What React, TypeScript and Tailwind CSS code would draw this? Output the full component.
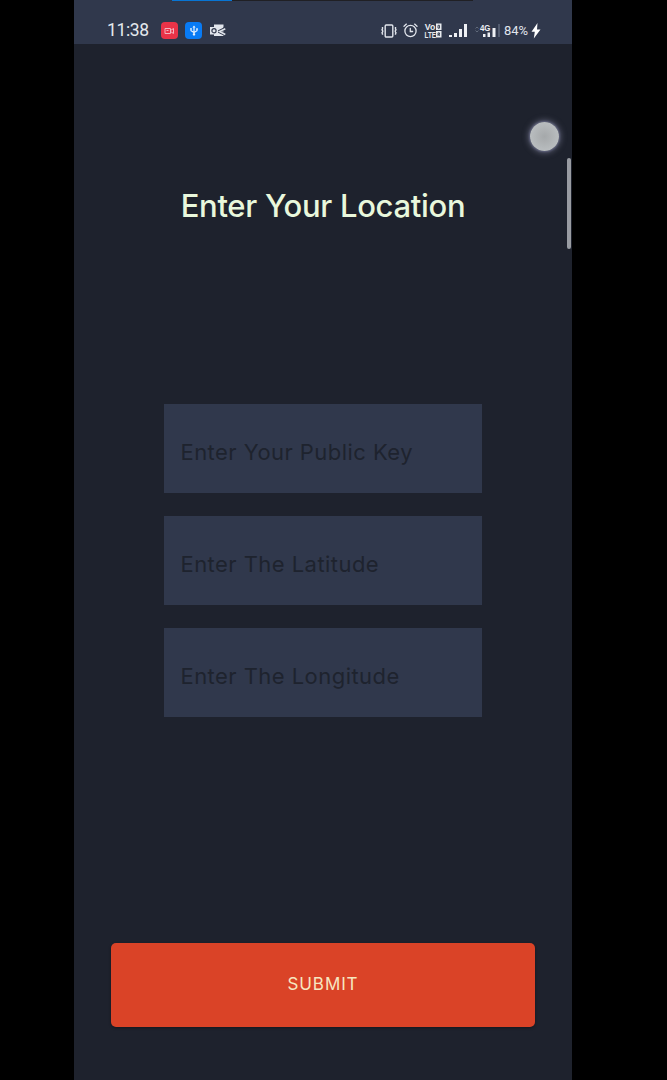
import React from "react";

function StatusLeft() {
  return (
    <div className="flex items-center">
      <span className="w-[54px] whitespace-nowrap pt-px text-[17.5px] leading-none tracking-[-0.35px] text-[#e4e8ee]">11:38</span>
      <div className="flex h-[17px] w-[17px] items-center justify-center rounded-[4px] bg-[#e93348]">
        <svg width="11" height="8" viewBox="0 0 11 8" fill="none" stroke="#f3b4bf" strokeWidth="1">
          <path d="M1 1.500h5.500v5H1zM6.500 3.500 9.500 1.500v5l-3-2M2.500 3.500h2" />
        </svg>
      </div>
      <div className="ml-[7px] flex h-[17px] w-[17px] items-center justify-center rounded-[4px] bg-[#087bf5]">
        <svg width="10" height="11" viewBox="0 0 11 12" fill="none" stroke="#e6f1ff" strokeWidth="1.3">
          <path d="M5.500 2v8M2.200 4.500v1.700L5.500 8.300 8.800 6.200V4.500" />
          <path d="M3.800 2.800 5.500.4l1.700 2.400z" fill="#e6f1ff" stroke="none" />
          <circle cx="5.500" cy="10.300" r="1.300" fill="#e6f1ff" stroke="none" />
          <circle cx="2.200" cy="4.200" r="1" fill="#e6f1ff" stroke="none" />
          <path d="M7.900 3.400h1.800v1.800H7.900z" fill="#e6f1ff" stroke="none" />
        </svg>
      </div>
      <svg className="ml-2" width="16" height="13" viewBox="0 0 16 13">
        <path d="M4 .5h9.500v11.500H4z" fill="#e1e5ec" />
        <path d="M14 3v7" stroke="#30384c" strokeWidth="1" />
        <path d="m15 4.500-6 3 6 3" fill="none" stroke="#30384c" strokeWidth="3" />
        <path d="m15.300 4.800-5.800 2.700 5.800 3" fill="none" stroke="#e1e5ec" strokeWidth="1.500" />
        <path d="M0 3h8v7.500H0z" fill="#e1e5ec" />
        <circle cx="4" cy="6.700" r="2.100" fill="none" stroke="#30384c" strokeWidth="1.200" />
      </svg>
    </div>
  );
}

function StatusRight() {
  return (
    <div className="flex items-center">
      <svg width="16" height="14" viewBox="0 0 16 14" fill="none" stroke="#e1e5ec" strokeWidth="1.4">
        <rect x="4.200" y="1" width="7.600" height="12" rx="1" />
        <path d="M1.500 3v2l-.5.8.7 1v1l-.7 1 .5 1v1M14.500 3v2l.5.8-.7 1v1l.7 1-.5 1v1" />
      </svg>
      <svg className="ml-[6px]" width="15" height="15" viewBox="0 0 15 15" fill="none" stroke="#e1e5ec" strokeWidth="1.300" strokeLinecap="round">
        <circle cx="7.500" cy="8" r="5.600" />
        <path d="M7.300 5.300v3.200h2.300M1 3.200 3.400 1.100M14 3.200l-2.400-2.100" />
      </svg>
      <svg className="ml-[6px]" width="18" height="15" viewBox="0 0 18 15" fill="#e8ebef" fontFamily="Liberation Sans, sans-serif" fontWeight="700">
        <text fontSize="8.800">
          <tspan x="0.800" y="6.900" textLength="10.500" lengthAdjust="spacingAndGlyphs">Vo</tspan>
          <tspan x="0.500" y="14.500" textLength="11.500" lengthAdjust="spacingAndGlyphs">LTE</tspan>
        </text>
        <path d="M12 .5h5.500v6.500H12zM12 8h5.500v6.500H12z" />
        <path d="M14 2.300h1.500v2.900H14zM14 12.900v-3h1.500v1.500H14M15.300 11.500v1.500" fill="none" stroke="#30384c" strokeWidth=".9" />
      </svg>
      <svg className="ml-[7px]" width="19" height="15" viewBox="0 0 19 15" fill="#eef0f4">
        <path d="M0 12h3v2H0zM5 10h3v4H5zM10 6h3v8h-3zM15 1h3v13h-3z" />
      </svg>
      <svg className="ml-[6px]" width="27" height="17" viewBox="0 0 27 17">
        <path d="m1.500 6.500 1.500-1.500 1.500 1.500M1.500 8.500l1.500 1.500 1.500-1.500" fill="none" stroke="#606a7b" />
        <text x="6" y="8.500" fontFamily="Liberation Sans, sans-serif" fontSize="9.500" fontWeight="700" fill="#eef0f4" textLength="10.500" lengthAdjust="spacingAndGlyphs">4G</text>
        <path d="M9 12h2.500v3H9zM13.500 10.500h2.500V15h-2.500zM18.500 6h3v9h-3z" fill="#eef0f4" />
        <path d="M24 2h2v13h-2z" fill="#535c70" />
      </svg>
      <span className="ml-[3px] w-[27px] whitespace-nowrap text-[13px] leading-none text-[#e1e5ec]">84%</span>
      <svg width="10" height="16" viewBox="0 0 10 16">
        <path d="M6.500 0 .5 8.800h3.300L2.800 15.500 9.500 6.500H6z" fill="#fff" />
      </svg>
    </div>
  );
}

const fields = ["Enter Your Public Key", "Enter The Latitude", "Enter The Longitude"];

export default function App() {
  return (
    <div className="flex h-[1080px] w-[667px] justify-center overflow-hidden bg-black pl-[74px] pr-[95px] font-['Inter','Noto_Sans',sans-serif]">
      <main className="relative flex w-[498px] shrink-0 flex-col items-center bg-[#1e222d]">
        <header className="flex h-11 w-full flex-col bg-[#30384c]">
          <div className="ml-[98px] flex h-px w-[301px] bg-[#202024]">
            <div className="w-[60px] bg-[#0875d4]" />
          </div>
          <div className="flex h-[43px] items-center justify-between pl-[33px] pr-[31px] pt-[16px] font-['Roboto',sans-serif]">
            <StatusLeft />
            <StatusRight />
          </div>
        </header>

        <h1 className="mt-[142px] h-10 whitespace-nowrap text-[31px] font-medium leading-10 tracking-[-0.3px] text-[#e9f8dc]">
          Enter Your Location
        </h1>

        <form className="mt-[178px] flex w-[318px] flex-col gap-[23.5px]">
          {fields.map((field) => (
            <label key={field} className="flex h-[88.5px] items-center bg-[#30384c] pl-[16.500px] pt-[8px] text-[22px] tracking-[0.45px] text-[#1e232e]">
              <span className="whitespace-nowrap">{field}</span>
            </label>
          ))}
        </form>

        <button className="mt-[226px] flex h-[84px] w-[424px] items-center justify-center rounded-[5px] bg-[#da4327] text-[17px] tracking-[0.9px] text-[#f6e7c0] shadow-[0_1px_3px_rgba(0,0,0,0.35)]">
          SUBMIT
        </button>

        <div className="absolute left-[456px] top-[122px] h-[29px] w-[29px] rounded-full bg-[radial-gradient(circle,#a5a8aa_0%,#b3b7b9_50%,#c2c6c9_100%)] shadow-[0_0_2px_1px_#626580,0_0_5px_3px_#454858]" />
        <div className="absolute right-px top-[158px] h-[91px] w-[4px] rounded-full bg-[#999ca2]" />
      </main>
    </div>
  );
}
